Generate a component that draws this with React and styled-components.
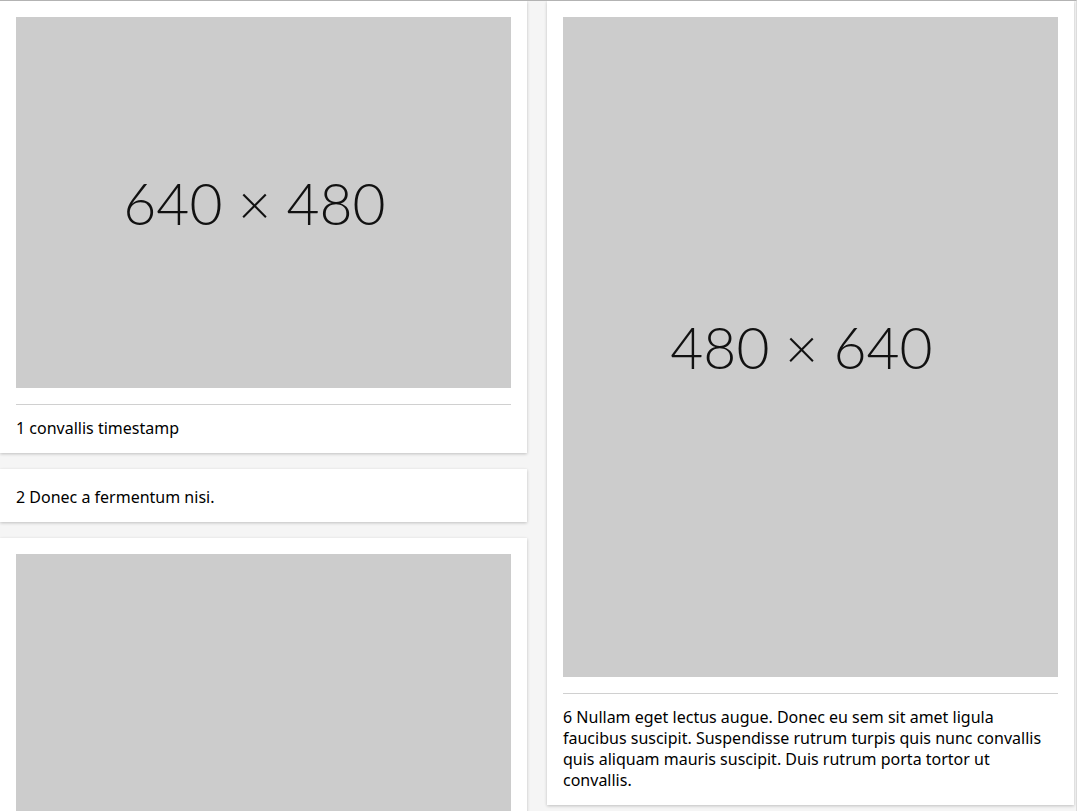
import React from "react";
import styled, { createGlobalStyle } from "styled-components";

const GlobalStyle = createGlobalStyle`
  html, body {
    margin: 0;
    padding: 0;
    background: #f5f5f5;
    height: 100%;
    overflow: hidden;
  }
  body {
    font-family: "Noto Sans", "Open Sans", Arial, sans-serif;
    color: #000;
  }
`;

const items = [
  { id: 1, img: [640, 480], text: "convallis timestamp" },
  { id: 2, text: "Donec a fermentum nisi." },
  { id: 3, img: [480, 640], text: "" },
  {
    id: 6,
    img: [480, 640],
    text:
      "Nullam eget lectus augue. Donec eu sem sit amet ligula faucibus suscipit. Suspendisse rutrum turpis quis nunc convallis quis aliquam mauris suscipit. Duis rutrum porta tortor ut convallis.",
  },
];

function Card({ item }) {
  return (
    <CardBox>
      {item.img && (
        <>
          <Placeholder $ratio={item.img[1] / item.img[0]}>
            <span>
              {item.img[0]} × {item.img[1]}
            </span>
          </Placeholder>
          <Divider />
        </>
      )}
      {item.text && (
        <Caption>
          {item.id} {item.text}
        </Caption>
      )}
    </CardBox>
  );
}

export default function App() {
  return (
    <>
      <GlobalStyle />
      <Page>
        <Column>
          <Card item={items[0]} />
          <Card item={items[1]} />
          <Card item={items[2]} />
        </Column>
        <Column>
          <Card item={items[3]} />
        </Column>
      </Page>
    </>
  );
}

const Page = styled.div`
  display: grid;
  grid-template-columns: 527px 527px;
  column-gap: 20px;
  align-items: start;
  width: 1076px;
  height: 810px;
  border-top: 1px solid #b3b3b3;
  border-right: 1px solid #dcdcdc;
  overflow: hidden;
  box-sizing: content-box;
`;

const Column = styled.div`
  display: flex;
  flex-direction: column;
  gap: 16px;
`;

const CardBox = styled.div`
  background: #fff;
  padding: 16px 16px 14px;
  box-shadow: 0 1px 3px rgba(0, 0, 0, 0.22);
`;

const Placeholder = styled.div`
  background: #cccccc;
  width: 100%;
  aspect-ratio: 1 / ${(p) => p.$ratio};
  display: flex;
  align-items: center;
  justify-content: center;
  padding-right: 18px;
  box-sizing: border-box;

  span {
    font-family: Lato, "Noto Sans", sans-serif;
    font-weight: 300;
    font-size: 57px;
    color: #111;
  }
`;

const Divider = styled.hr`
  border: 0;
  border-top: 1px solid #d0d0d0;
  margin: 16px 0 0;
`;

const Caption = styled.div`
  font-size: 16px;
  line-height: 21px;
  padding-top: 13px;
  ${CardBox} > &:first-child {
    padding-top: 2px;
  }
`;
